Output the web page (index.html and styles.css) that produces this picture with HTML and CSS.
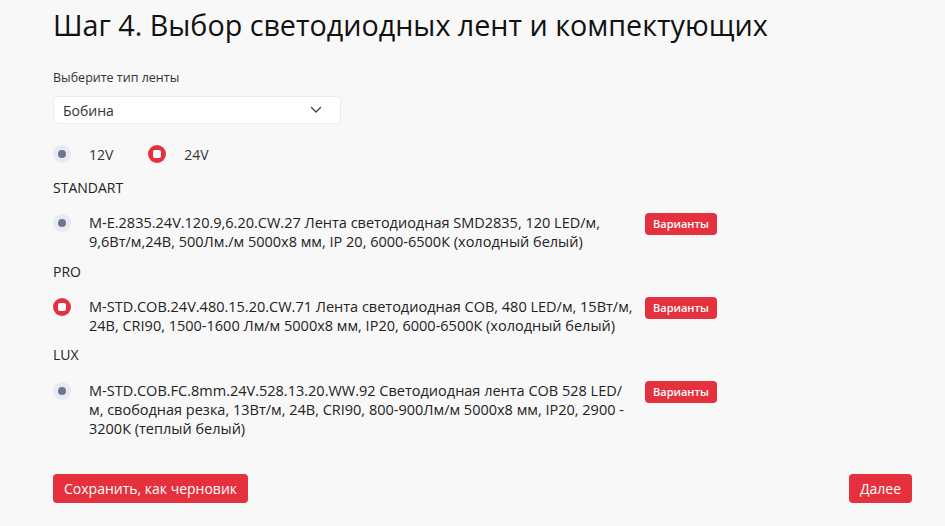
FILE: index.html
```html
<!DOCTYPE html>
<html lang="ru">
<head>
<meta charset="utf-8">
<link rel="stylesheet" href="styles.css">
</head>
<body>
<div class="page">
  <h1 class="title">Шаг 4. Выбор светодиодных лент и компектующих</h1>
  <div class="field">
    <div class="label">Выберите тип ленты</div>
    <div class="select">
      <span>Бобина</span>
      <svg class="chev" width="12" height="8" viewBox="0 0 12 8"><path d="M1.5 1.5 L6 6 L10.5 1.5" fill="none" stroke="#444" stroke-width="1.4" stroke-linecap="round" stroke-linejoin="round"/></svg>
    </div>
  </div>
  <div class="volt">
    <label class="opt"><span class="radio"></span><span>12V</span></label>
    <label class="opt"><span class="radio on"></span><span>24V</span></label>
  </div>

  <div class="group">STANDART</div>
  <div class="item">
    <span class="radio"></span>
    <div class="desc">M-E.2835.24V.120.9,6.20.CW.27 Лента светодиодная SMD2835, 120 LED/м,<br>9,6Вт/м,24В, 500Лм./м 5000х8 мм, IP 20, 6000-6500К (холодный белый)</div>
    <span class="badge">Варианты</span>
  </div>

  <div class="group">PRO</div>
  <div class="item">
    <span class="radio on"></span>
    <div class="desc">M-STD.COB.24V.480.15.20.CW.71 Лента светодиодная COB, 480 LED/м, 15Вт/м,<br>24В, CRI90, 1500-1600 Лм/м 5000х8 мм, IP20, 6000-6500К (холодный белый)</div>
    <span class="badge">Варианты</span>
  </div>

  <div class="group group-lux">LUX</div>
  <div class="item item-last">
    <span class="radio"></span>
    <div class="desc">M-STD.COB.FC.8mm.24V.528.13.20.WW.92 Светодиодная лента COB 528 LED/<br>м, свободная резка, 13Вт/м, 24В, CRI90, 800-900Лм/м 5000х8 мм, IP20, 2900 -<br>3200К (теплый белый)</div>
    <span class="badge">Варианты</span>
  </div>

  <div class="actions">
    <button class="btn">Сохранить, как черновик</button>
    <button class="btn">Далее</button>
  </div>
</div>
</body>
</html>
```

FILE: styles.css
```css
* { box-sizing: border-box; }
html, body { margin: 0; padding: 0; background: #f8f8f8; }
body { font-family: "Open Sans", "Noto Sans", sans-serif; color: #222; }
.page { padding: 0 33px 0 53px; }
.title { margin: 0; padding-top: 5px; font-size: 28.7px; font-weight: 400; line-height: 40px; color: #111; }
.field { margin-top: 25px; }
.label { font-size: 12.5px; line-height: 16px; color: #333; }
.select { margin-top: 10px; width: 288px; height: 28px; background: #fff; border: 1px solid #ececec; border-radius: 4px; display: flex; align-items: center; justify-content: space-between; padding: 0 18px 0 9px; font-size: 14px; color: #333; }
.volt { display: flex; margin-top: 17px; height: 26px; align-items: center; }
.opt { display: flex; align-items: center; font-size: 14px; color: #333; margin-right: 35px; }
.opt .radio { margin-right: 18px; }
.radio { width: 18px; height: 18px; flex: none; border-radius: 50%; background: #e7eaf3; position: relative; display: inline-block; }
.radio::after { content: ""; position: absolute; left: 5px; top: 5px; width: 8px; height: 8px; border-radius: 50%; background: #6e7591; }
.radio.on { background: #e5313d; }
.radio.on::after { left: 5px; top: 5px; width: 8px; height: 8px; background: #fff; border-radius: 2px; }
.group { margin-top: 11px; font-size: 14px; line-height: 20px; color: #222; }
.group-lux { margin-top: 10px; }
.item { display: grid; grid-template-columns: 36px 556px auto; align-items: start; margin-top: 15px; }
.item-last { margin-top: 16px; }
.item .radio { margin-top: 1px; }
.desc { font-size: 14.5px; line-height: 19px; color: #222; }
.badge { background: #e5313d; color: #fff; font-size: 11px; font-weight: 600; border-radius: 4px; padding: 3px 8px; line-height: 16px; justify-self: start; }
.actions { display: flex; justify-content: space-between; margin-top: 36px; }
.btn { font-family: inherit; font-size: 14px; color: #fff; background: #e5313d; border: none; border-radius: 4px; height: 29px; padding: 0 11px; line-height: 29px; }
```
